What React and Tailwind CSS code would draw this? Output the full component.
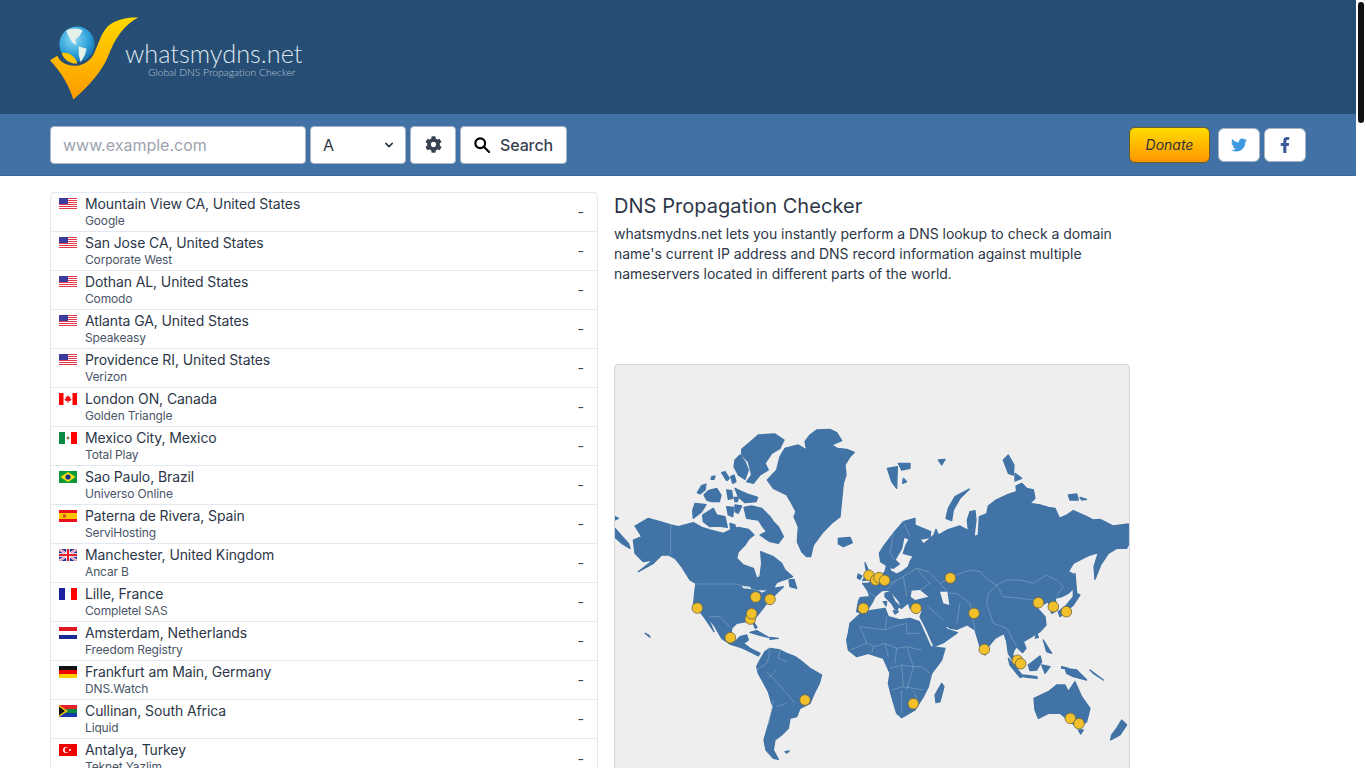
import { FaCog, FaTwitter, FaFacebookF } from 'react-icons/fa'

const rows = [
  ['us', 'Mountain View CA, United States', 'Google'],
  ['us', 'San Jose CA, United States', 'Corporate West'],
  ['us', 'Dothan AL, United States', 'Comodo'],
  ['us', 'Atlanta GA, United States', 'Speakeasy'],
  ['us', 'Providence RI, United States', 'Verizon'],
  ['ca', 'London ON, Canada', 'Golden Triangle'],
  ['mx', 'Mexico City, Mexico', 'Total Play'],
  ['br', 'Sao Paulo, Brazil', 'Universo Online'],
  ['es', 'Paterna de Rivera, Spain', 'ServiHosting'],
  ['gb', 'Manchester, United Kingdom', 'Ancar B'],
  ['fr', 'Lille, France', 'Completel SAS'],
  ['nl', 'Amsterdam, Netherlands', 'Freedom Registry'],
  ['de', 'Frankfurt am Main, Germany', 'DNS.Watch'],
  ['za', 'Cullinan, South Africa', 'Liquid'],
  ['tr', 'Antalya, Turkey', 'Teknet Yazlim'],
]

function Flag({ code }) {
  const parts = {
    us: (
      <>
        <rect width="18" height="12" fill="#fff" />
        {[0, 2, 4, 6, 8, 10].map(y => <rect key={y} y={y} width="18" height="1" fill="#e23a4a" />)}
        <rect width="9" height="6" fill="#3c3b9e" />
      </>
    ),
    ca: (
      <>
        <rect width="18" height="12" fill="#fff" />
        <rect width="4.5" height="12" fill="#f00" />
        <rect x="13.5" width="4.5" height="12" fill="#f00" />
        <path d="M9 2l1 2 1.5-.5L11 6l1-.5.5 1-1.5 1.5H9.5V10h-1V8H7L5.5 6.500l.5-1 1 .5-.5-2.500L8 4z" fill="#e11" />
      </>
    ),
    mx: (
      <>
        <rect width="18" height="12" fill="#fff" />
        <rect width="6" height="12" fill="#0a8a45" />
        <rect x="12" width="6" height="12" fill="#f00" />
        <circle cx="9" cy="6" r="1.500" fill="#8a7a5a" />
      </>
    ),
    br: (
      <>
        <rect width="18" height="12" fill="#0a9a3c" />
        <path d="M9 1l7.500 5L9 11 1.500 6z" fill="#f7e017" />
        <circle cx="9" cy="6" r="2.600" fill="#1c2f8a" />
      </>
    ),
    es: (
      <>
        <rect width="18" height="12" fill="#e8101a" />
        <rect y="3" width="18" height="6" fill="#ffc400" />
        <rect x="4" y="4.500" width="3" height="3" fill="#c8502a" />
      </>
    ),
    gb: (
      <>
        <rect width="18" height="12" fill="#2a2f9a" />
        <path d="M0 0l18 12M18 0L0 12" stroke="#fff" strokeWidth="2.400" />
        <path d="M0 0l18 12M18 0L0 12" stroke="#e0485a" strokeWidth="0.800" />
        <path d="M9 0v12M0 6h18" stroke="#fff" strokeWidth="3.600" />
        <path d="M9 0v12M0 6h18" stroke="#e8202a" strokeWidth="2" />
      </>
    ),
    fr: (
      <>
        <rect width="18" height="12" fill="#fff" />
        <rect width="6" height="12" fill="#1a1fa0" />
        <rect x="12" width="6" height="12" fill="#f00" />
      </>
    ),
    nl: (
      <>
        <rect width="18" height="12" fill="#fff" />
        <rect width="18" height="4" fill="#e01a20" />
        <rect y="8" width="18" height="4" fill="#1a2a90" />
      </>
    ),
    de: (
      <>
        <rect width="18" height="4" fill="#111" />
        <rect y="4" width="18" height="4" fill="#e00" />
        <rect y="8" width="18" height="4" fill="#fc0" />
      </>
    ),
    za: (
      <>
        <rect width="18" height="4" fill="#e8202a" />
        <rect y="8" width="18" height="4" fill="#1a3aa8" />
        <rect y="4" width="18" height="4" fill="#0a8a45" />
        <path d="M0 0l9 6-9 6z" fill="#f5c400" />
        <path d="M0 1.500l6 4.500-6 4.500z" fill="#111" />
      </>
    ),
    tr: (
      <>
        <rect width="18" height="12" fill="#f00000" />
        <circle cx="7" cy="6" r="3" fill="#fff" />
        <circle cx="8" cy="6" r="2.400" fill="#f00000" />
        <circle cx="11" cy="6" r="1" fill="#fff" />
      </>
    ),
  }
  return <svg viewBox="0 0 18 12" className="w-[18px] h-[12px] shrink-0 mt-[5px]">{parts[code]}</svg>
}

function Logo() {
  return (
    <svg viewBox="60 40 270 260" className="w-[90px] h-[87px] shrink-0">
      <defs>
        <linearGradient id="swoosh" x1="0" y1="0" x2="0" y2="1">
          <stop offset="0" stopColor="#ffd800" />
          <stop offset="1" stopColor="#ff9a00" />
        </linearGradient>
        <radialGradient id="globe" cx="0.4" cy="0.35" r="0.75">
          <stop offset="0" stopColor="#8fdcf5" />
          <stop offset="0.6" stopColor="#2b9fd8" />
          <stop offset="1" stopColor="#1566a8" />
        </radialGradient>
      </defs>
      <path d="M60 178L82 165C92 195 150 212 185 170C203 145 205 110 232 78C255 55 295 48 325 50C285 70 255 110 235 165C215 215 170 262 130 296C118 255 95 215 60 178Z" fill="url(#swoosh)" />
      <circle cx="141" cy="130" r="53" fill="url(#globe)" />
      <path d="M108 90C125 80 150 82 158 90L148 106L136 116L140 132L128 126L116 106Z" fill="#e4f0ea" />
      <path d="M146 136L170 144L164 164L152 184L146 162Z" fill="#e4f0ea" />
      <path d="M95 157C115 152 135 165 142 188C120 190 100 175 95 157Z" fill="#ffc400" />
    </svg>
  )
}

const land = [
  // Greenland
  'M620 30L660 28L680 38L695 62L665 75L682 85L710 88L733 97L720 110L705 135L708 165L700 190L695 240L690 290L665 310L640 335L610 375L602 410L590 410L575 395L562 365L565 320L552 290L558 275L545 250L530 225L490 205L472 180L500 150L510 110L525 85L565 75L590 90L585 65L600 45Z',
  // Arctic Canada
  'M395 88L425 62L445 45L495 42L522 60L510 85L485 100L465 130L475 150L450 165L430 190L410 185L425 165L415 125L395 105Z',
  'M375 120L390 105L405 125L415 150L405 178L385 165L372 140Z',
  'M335 158L345 155L358 175L350 182Z',
  'M362 170L372 165L378 185L368 190Z',
  'M305 170L315 168L312 178L303 178Z',
  'M262 218L275 197L288 192L285 210L270 222Z',
  'M282 225L295 212L320 205L333 225L328 245L305 245L290 240Z',
  'M350 210L365 212L368 235L355 238Z',
  'M372 232L385 232L382 245L375 245Z',
  'M375 205L395 215L420 225L443 232L438 245L405 248L385 230Z',
  'M255 250L288 254L275 275L250 295L248 272Z',
  'M278 285L310 265L320 285L345 290L352 322L325 318L300 320L280 305Z',
  'M350 260L372 262L368 290L355 285Z',
  'M375 255L395 258L385 280L375 275Z',
  'M360 310L375 315L378 335L362 330Z',
  'M402 262L425 258L455 265L480 290L490 305L505 320L520 350L505 370L480 365L450 345L470 335L458 320L445 300L410 295Z',
  // North and central America
  'M75 318L115 295L150 305L182 315L205 320L250 308L275 322L300 330L340 340L365 328L385 322L415 328L432 345L418 355L405 375L385 395L380 415L400 435L430 445L440 475L450 470L455 430L452 395L490 410L515 430L525 450L548 470L520 480L500 488L490 505L520 500L500 520L470 550L455 570L435 595L430 605L441 622L436 625L425 600L410 605L380 610L365 625L362 650L375 665L390 650L410 645L415 660L400 670L420 685L450 700L445 708L420 695L400 685L385 680L360 672L335 655L315 620L292 590L312 635L285 595L270 575L250 560L255 510L258 490L240 480L215 440L195 415L175 405L155 405L130 430L85 455L130 420L100 425L75 400L70 360L95 350Z',
  'M537 480L552 478L560 505L540 500Z',
  // South America
  'M440 740L450 720L465 695L480 685L510 690L530 700L555 710L570 720L600 745L635 765L628 790L615 815L600 850L570 865L560 890L540 895L535 925L515 945L495 960L490 990L505 1018L490 1015L468 990L462 960L475 915L490 860L485 850L475 815L445 760Z',
  // Caribbean and small islands
  'M420 637L440 632L475 652L450 646Z',
  'M480 652L505 655L480 658Z',
  'M15 290L25 295L15 300Z',
  'M15 325L55 370L60 385L35 370L15 352Z',
  'M105 640L120 652L116 645Z',
  'M525 995L538 993L530 999Z',
  // Iceland
  'M685 355L720 352L727 368L700 380L685 372Z',
]

const landEast = [
  // Eurasia with Scandinavia, clockwise from Kola
  'M165 315L212 335L210 352L180 358L190 372L205 360L222 345L228 328L235 345L262 330L300 318L325 332L322 300L330 275L345 272L348 300L342 350L355 345L358 290L380 282L385 258L408 240L440 225L470 215L468 198L485 190L500 205L520 210L525 235L510 250L540 255L565 262L585 265L598 295L620 285L640 272L680 290L700 300L720 298L760 318L805 312L807 370L800 385L770 385L745 400L722 435L705 478L702 440L715 398L690 405L660 420L640 430L625 455L640 462L645 500L625 520L605 530L585 535L592 570L575 580L565 545L555 550L530 562L555 590L558 615L540 635L515 650L490 665L498 685L488 698L470 680L462 690L458 705L480 745L472 745L445 700L440 665L432 640L405 655L385 680L375 705L360 680L345 630L322 615L290 628L272 625L245 610L262 628L292 638L250 668L222 680L198 625L180 590L188 570L150 565L145 548L125 565L118 545L110 535L88 510L65 512L50 525L45 530L35 550L22 570L0 578L-10 575L-5 545L0 533L30 530L22 510L8 490L25 490L50 475L62 470L75 455L80 435L92 432L90 452L110 462L125 455L145 440L150 425L160 408L130 400L138 375L148 358L132 350L125 385L105 420L118 432L100 445L85 440L62 425L58 400L70 380L100 340L130 305L165 295Z',
  // Italy
  'M75 520L90 515L105 545L125 565L115 560L110 575L95 550L75 530Z',
  // Africa
  'M-35 640L-30 610L0 582L30 572L75 565L85 590L120 600L150 595L178 605L185 620L212 680L255 685L245 720L215 760L205 800L190 830L165 870L125 893L110 880L95 830L85 790L90 760L70 715L25 700L-10 710L-35 690L-40 660Z',
  'M225 825L245 790L252 800L240 845L228 848Z',
  // Australia and NZ
  'M522 835L565 815L590 795L615 795L625 815L645 785L665 830L690 865L680 905L655 925L625 900L600 880L565 880L535 895L525 870Z',
  'M655 930L670 930L662 942Z',
  'M770 925L785 900L800 915L780 945L752 960L755 945Z',
  // Japan
  'M645 460L650 520L660 525L640 555L600 590L595 575L620 555L640 530L640 500Z',
  // SE Asia
  'M505 735L540 708L545 725L530 750L510 752Z',
  'M445 715L490 770L480 772L450 735Z',
  'M490 765L530 770L532 775L495 771Z',
  'M615 745L650 750L680 780L640 770L620 760Z',
  'M550 660L575 700L560 695Z',
  'M545 735L570 740L555 760Z',
  'M530 640L535 652L526 654Z',
  'M605 740L625 745L605 745Z',
  'M690 750L730 780L700 760Z',
  // UK, Ireland, Mediterranean
  'M15 428L25 450L38 476L8 482L20 462Z',
  'M-5 462L6 468L0 478L-8 474Z',
  'M70 545L80 545L78 558Z',
  'M100 572L115 575L105 582Z',
  // Arctic islands
  'M82 145L112 140L110 205L95 185Z',
  'M115 130L150 130L150 145L125 150Z',
  'M130 175L140 185L128 190Z',
  'M235 120L255 118L245 135Z',
  'M328 207L285 230L265 265L258 295L275 302L280 270L300 235Z',
  'M430 120L445 105L462 135L460 165L445 160Z',
  'M465 160L485 175L465 183Z',
  'M625 225L650 222L655 240L630 240Z',
  'M660 232L680 238L665 240Z',
]

// inland water, painted over the land
const water = 'M155 512L180 510L205 530L165 540L152 530ZM240 515L262 515L268 555L250 550Z'
const lakes = 'M395 497L420 500L425 508L400 505ZM445 510L470 512L455 518Z'

// country borders, only the bigger ones
const borders = 'M182 315L182 405M258 492L380 492L420 505L440 512L470 510M295 590L330 590L345 605L360 622M480 685L475 715L470 730L440 750M510 690L505 715L530 725M500 750L475 775M470 755L500 785L530 820L555 850M490 840L475 915M530 850L500 860'
const bordersEast = 'M25 515L45 530M50 475L70 495L90 490L130 470L170 445L190 470L210 490L180 510M100 340L90 400L105 420M130 305L150 350M170 445L205 455L240 490L290 465L330 450L360 455L385 480L410 495L440 480L480 480L520 490L560 465L590 480L610 500L590 530M410 495L430 530L480 535L520 540M240 490L265 520L290 520L330 550L345 630M410 495L385 520L380 550L400 610L440 625L470 680M300 550L290 610M205 560L250 600M0 620L40 625L75 630L80 590M75 630L100 620L140 610L140 640L180 640M-30 690L20 670L45 680L75 670L110 685L140 680L185 690M20 670L0 620M90 745L125 735L160 740L185 740L210 760M140 680L160 740M95 810L130 800L190 810M125 810L125 880M160 740L140 810M80 510L110 480M130 470L140 530M40 680L35 700M75 670L85 710M110 685L105 730M125 735L130 800M160 810L175 850'

const markers = [
  [262, 564], [437, 531], [480, 538], [421, 597], [425, 581], [361, 653], [585, 840],
]
const markersEast = [
  [27, 466], [47, 480], [57, 473], [74, 481], [10, 565], [168, 565], [271, 474], [342, 580],
  [373, 688], [472, 721], [482, 731], [535, 548], [580, 560], [619, 575], [160, 851], [631, 895], [657, 911],
]

function Marker({ x, y }) {
  return <circle cx={x} cy={y} r="16" fill="#f1c02b" stroke="#6f6a45" strokeWidth="2.500" />
}

function WorldMap() {
  return (
    <svg viewBox="15 -165 1542 1434" className="w-full h-full block">
      <g fill="#4173a6" stroke="#4173a6" strokeWidth="4" strokeLinejoin="round">
        {land.map((d, i) => <path key={i} d={d} />)}
      </g>
      <path d={lakes} fill="#eeeeee" />
      <path d={borders} fill="none" stroke="#9dbad6" strokeWidth="1.300" />
      <g transform="translate(750 0)">
        <g fill="#4173a6" stroke="#4173a6" strokeWidth="4" strokeLinejoin="round">
          {landEast.map((d, i) => <path key={i} d={d} />)}
        </g>
        <path d={bordersEast} fill="none" stroke="#9dbad6" strokeWidth="1.300" />
        <path d={water} fill="#eeeeee" />
        {markersEast.map(([x, y], i) => <Marker key={i} x={x} y={y} />)}
      </g>
      {markers.map(([x, y], i) => <Marker key={i} x={x} y={y} />)}
    </svg>
  )
}

export default function App() {
  return (
    <div className="flex h-screen overflow-hidden bg-white font-['Inter',sans-serif] text-[#2d3748]">
      <div className="w-[1356px] shrink-0">
        <header className="h-[114px] bg-[#264d73] pl-[50px] flex items-center">
          <Logo />
          <div className="-ml-[15px] mt-[2px] flex flex-col items-end font-['Lato',sans-serif] text-[#dfe6ee]">
            <div className="text-[25.3px] font-light leading-[30px]">whatsmydns.net</div>
            <div className="text-[10.3px] font-light leading-[12px] pr-[7px] -mt-[2px] text-[#b7c6d6]">Global DNS Propagation Checker</div>
          </div>
        </header>

        <div className="h-[62px] bg-[#4272a5] border-b border-[#3b6896] px-[50px] flex items-center justify-between">
          <div className="flex gap-1">
            <input
              placeholder="www.example.com"
              className="w-[256px] h-[38px] rounded border border-[#a9b4c2] bg-white px-3 text-base text-gray-700 placeholder:text-[#9ca3af]"
            />
            <div className="w-[96px] h-[38px] rounded border border-[#a9b4c2] bg-white pl-3 pr-2 flex items-center justify-between text-base text-[#2d3748]">
              <span>A</span>
              <svg viewBox="0 0 20 20" className="w-4 h-4" fill="none" stroke="#2d3748" strokeWidth="2" strokeLinecap="round" strokeLinejoin="round">
                <path d="M6 8l4 4 4-4" />
              </svg>
            </div>
            <button className="w-[46px] h-[38px] rounded border border-[#a9b4c2] bg-white flex items-center justify-center text-[#374151]">
              <FaCog className="w-[17px] h-[17px]" />
            </button>
            <button className="w-[107px] h-[38px] rounded border border-[#a9b4c2] bg-white flex items-center justify-center gap-[10px] text-base font-medium tracking-[-0.1px] text-[#374151]">
              <svg viewBox="0 0 18 18" className="w-4 h-4" fill="none" stroke="#000" strokeWidth="2.400" strokeLinecap="round">
                <circle cx="7" cy="7" r="5.500" />
                <path d="M11 11l6 6" />
              </svg>
              Search
            </button>
          </div>
          <div className="flex items-center">
            <button className="w-[81px] h-[36px] rounded-md border border-[#6b5a2a] bg-gradient-to-b from-[#ffdc00] to-[#ff9500] text-sm italic text-[#333]">
              Donate
            </button>
            <button className="ml-[8px] w-[42px] h-[34px] rounded-md border border-[#a9b4c2] bg-white flex items-center justify-center text-[#3d9ae0]">
              <FaTwitter className="w-4 h-4" />
            </button>
            <button className="ml-[4px] w-[42px] h-[34px] rounded-md border border-[#a9b4c2] bg-white flex items-center justify-center text-[#3f5a9a]">
              <FaFacebookF className="w-4 h-4" />
            </button>
          </div>
        </div>

        <main className="pl-[50px] pt-[16px] flex gap-4 items-start">
          <div className="w-[548px] rounded border border-[#e2e8f0] divide-y divide-[#e2e8f0] shrink-0">
            {rows.map(([code, name, org], i) => (
              <div key={i} className="h-[39px] pl-[8px] pr-[13px] flex items-center">
                <div className="flex self-start flex-1 gap-2">
                  <Flag code={code} />
                  <div>
                    <div className="text-sm tracking-[-0.1px] leading-[22px] text-[#2d3748]">{name}</div>
                    <div className="text-xs tracking-[-0.15px] leading-[12px] text-[#4a5568]">{org}</div>
                  </div>
                </div>
                <span className="text-sm text-[#374151]">-</span>
              </div>
            ))}
          </div>

          <div className="w-[516px] shrink-0">
            <h1 className="text-[20px] tracking-[0.05px] leading-[28px] mb-[4px] text-[#2d3748]">DNS Propagation Checker</h1>
            <p className="text-sm tracking-[-0.03px] leading-[20px] text-[#2d3748]">
              whatsmydns.net lets you instantly perform a DNS lookup to check a domain name's current IP address and DNS record information against multiple nameservers located in different parts of the world.
            </p>
            <div className="mt-[80px] h-[480px] rounded border border-[#d4d4d8] bg-[#eeeeee] overflow-hidden">
              <WorldMap />
            </div>
          </div>
        </main>
      </div>
      <div className="w-[10px] shrink-0 pl-[2px] py-[2px]">
        <div className="h-[121px] w-[6px] rounded-full bg-[#111]" />
      </div>
    </div>
  )
}
